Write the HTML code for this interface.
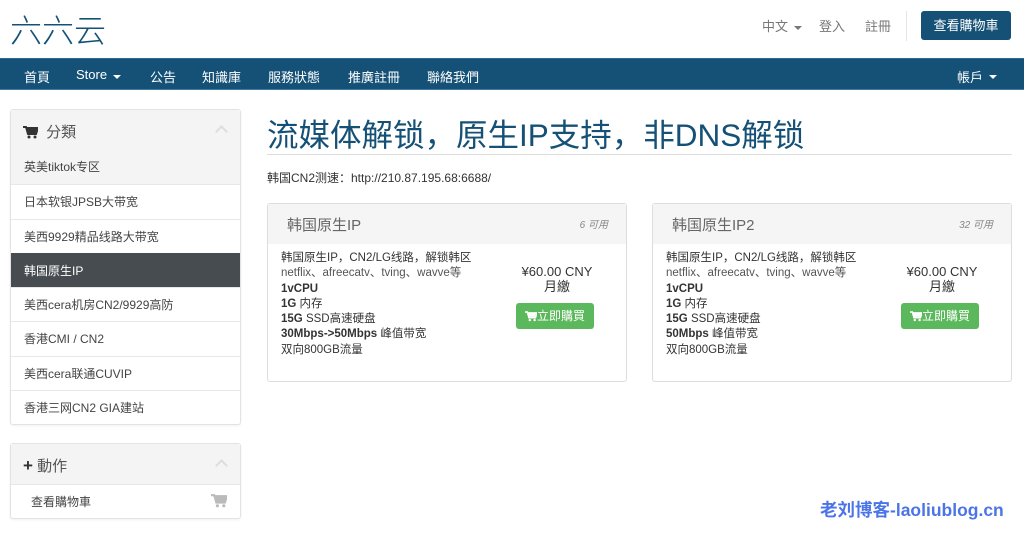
<!DOCTYPE html>
<html><head><meta charset="utf-8"><style>
*{box-sizing:border-box;margin:0;padding:0}
body{width:1024px;height:537px;overflow:hidden;background:#fff;font-family:"Liberation Sans","Noto Sans CJK SC",sans-serif;font-size:13px;color:#333;position:relative}
.abs{position:absolute}
.logo{left:10px;top:6px;font-size:32px;color:#155176;font-family:"Noto Sans CJK SC",sans-serif;font-weight:300;letter-spacing:0px}
.top a{position:absolute;top:16px;color:#777;font-size:13px}
.cartbtn{left:921px;top:11px;width:90px;height:29px;background:#155176;border-radius:3px;color:#fff;font-size:13px;text-align:center;line-height:29px}
.nav{left:0;top:58px;width:1024px;height:32px;background:#155176;border-top:1px solid #2a6a95;border-bottom:1px solid #3e7ba5}
.nav span{position:absolute;top:8px;color:#fff;font-size:13px}
.caret{display:inline-block;border-top:4px solid currentColor;border-left:4px solid transparent;border-right:4px solid transparent;vertical-align:middle;margin-left:6px}
.panel{left:10px;width:231px;border:1px solid #e3e3e3;border-radius:3px;background:#fff;box-shadow:0 1px 2px rgba(0,0,0,.06)}
.ph{height:40px;background:#f4f4f4;font-size:15px;color:#555;padding:11px 12px;position:relative}
.chev{position:absolute;right:14px;top:17px;width:9px;height:9px;border-left:2px solid #ddd;border-top:2px solid #ddd;transform:rotate(45deg)}
.it{height:34.3px;border-top:1px solid #e8e8e8;padding:8px 13px;font-size:12px;color:#444}
.act{background:#464c50;color:#fff;border-color:#464c50}
h1{position:absolute;left:267px;top:110px;font-size:31.5px;font-weight:normal;color:#155176;font-family:"Liberation Sans","Noto Sans CJK SC",sans-serif}
.card{width:360px;height:179px;border:1px solid #ddd;border-radius:3px;top:203px}
.ch{height:40px;background:#f5f5f5;padding:10px 19px;font-size:15px;color:#666;position:relative}
.ch i{position:absolute;right:18px;top:12px;font-size:10px;color:#888}
.cb{padding:7px 13px;font-size:11.5px;line-height:15.3px;color:#333;position:relative}
.cb .b{font-weight:bold}
.pr{position:absolute;left:248px;top:20px;text-align:center;width:82px;font-size:13px}
.buy{display:block;margin-top:8px;width:78px;height:26px;background:#5cb85c;color:#fff;border-radius:3px;line-height:26px;font-size:12px}
svg.c{vertical-align:-2px}
</style></head><body>
<div class="abs logo">六六云</div>
<div class="top"><a style="left:762px">中文<span class="caret"></span></a><a style="left:819px">登入</a><a style="left:865px">註冊</a></div>
<div class="abs" style="left:906px;top:11px;width:1px;height:30px;background:#e5e5e5"></div>
<div class="abs cartbtn">查看購物車</div>
<div class="abs nav"><span style="left:24px">首頁</span><span style="left:76px">Store<span class="caret"></span></span><span style="left:150px">公告</span><span style="left:202px">知識庫</span><span style="left:268px">服務狀態</span><span style="left:348px">推廣註冊</span><span style="left:427px">聯絡我們</span><span style="left:957px">帳戶<span class="caret"></span></span></div>
<div class="abs panel" style="top:109px">
<div class="ph"><svg class="c" width="15" height="13" viewBox="0 0 15 13"><path d="M0 1h3l2 7h8l2-6H4" fill="none" stroke="#333" stroke-width="2"/><path d="M4 2h10l-1.5 5H5z" fill="#333"/><circle cx="6" cy="11" r="1.5" fill="#333"/><circle cx="12" cy="11" r="1.5" fill="#333"/></svg> <span style="margin-left:4px">分類</span><div class="chev"></div></div>
<div class="it" style="background:#f4f4f4;border-top:none">英美tiktok专区</div>
<div class="it">日本软银JPSB大带宽</div>
<div class="it">美西9929精品线路大带宽</div>
<div class="it act">韩国原生IP</div>
<div class="it">美西cera机房CN2/9929高防</div>
<div class="it">香港CMI / CN2</div>
<div class="it">美西cera联通CUVIP</div>
<div class="it">香港三网CN2 GIA建站</div>
</div>
<div class="abs panel" style="top:443px">
<div class="ph"><b style="font-size:17px;color:#333">+</b> 動作<div class="chev"></div></div>
<div class="it" style="padding-left:20px">查看購物車<svg class="c" style="float:right;margin-top:1px" width="16" height="14" viewBox="0 0 15 13"><path d="M0 1h3l2 7h8l2-6H4" fill="none" stroke="#bbb" stroke-width="2"/><path d="M4 2h10l-1.5 5H5z" fill="#bbb"/><circle cx="6" cy="11" r="1.5" fill="#bbb"/><circle cx="12" cy="11" r="1.5" fill="#bbb"/></svg></div>
</div>
<h1>流媒体解锁，原生IP支持，非DNS解锁</h1>
<div class="abs" style="left:267px;top:154px;width:745px;height:1px;background:#ddd"></div>
<div class="abs" style="left:267px;top:169px;font-size:12px">韩国CN2测速：http://210.87.195.68:6688/</div>
<div class="abs card" style="left:267px">
<div class="ch">韩国原生IP<i>6 可用</i></div>
<div class="cb">韩国原生IP，CN2/LG线路，解锁韩区<br><span style="color:#555">netflix、afreecatv、tving、wavve等</span><br><span class="b">1vCPU</span><br><span class="b">1G</span> 内存<br><span class="b">15G</span> SSD高速硬盘<br><span class="b">30Mbps->50Mbps</span> 峰值带宽<br>双向800GB流量
<div class="pr">¥60.00 CNY<br>月繳<span class="buy"><svg class="c" width="12" height="11" viewBox="0 0 15 13"><path d="M0 1h3l2 7h8l2-6H4" fill="none" stroke="#fff" stroke-width="2"/><path d="M4 2h10l-1.5 5H5z" fill="#fff"/><circle cx="6" cy="11" r="1.5" fill="#fff"/><circle cx="12" cy="11" r="1.5" fill="#fff"/></svg>立即購買</span></div></div>
</div>
<div class="abs card" style="left:652px">
<div class="ch">韩国原生IP2<i>32 可用</i></div>
<div class="cb">韩国原生IP，CN2/LG线路，解锁韩区<br><span style="color:#555">netflix、afreecatv、tving、wavve等</span><br><span class="b">1vCPU</span><br><span class="b">1G</span> 内存<br><span class="b">15G</span> SSD高速硬盘<br><span class="b">50Mbps</span> 峰值带宽<br>双向800GB流量
<div class="pr">¥60.00 CNY<br>月繳<span class="buy"><svg class="c" width="12" height="11" viewBox="0 0 15 13"><path d="M0 1h3l2 7h8l2-6H4" fill="none" stroke="#fff" stroke-width="2"/><path d="M4 2h10l-1.5 5H5z" fill="#fff"/><circle cx="6" cy="11" r="1.5" fill="#fff"/><circle cx="12" cy="11" r="1.5" fill="#fff"/></svg>立即購買</span></div></div>
</div>
<div class="abs" style="left:820px;top:497px;font-size:17.5px;font-weight:bold;color:#4a74e8">老刘博客-laoliublog.cn</div>
</body></html>
